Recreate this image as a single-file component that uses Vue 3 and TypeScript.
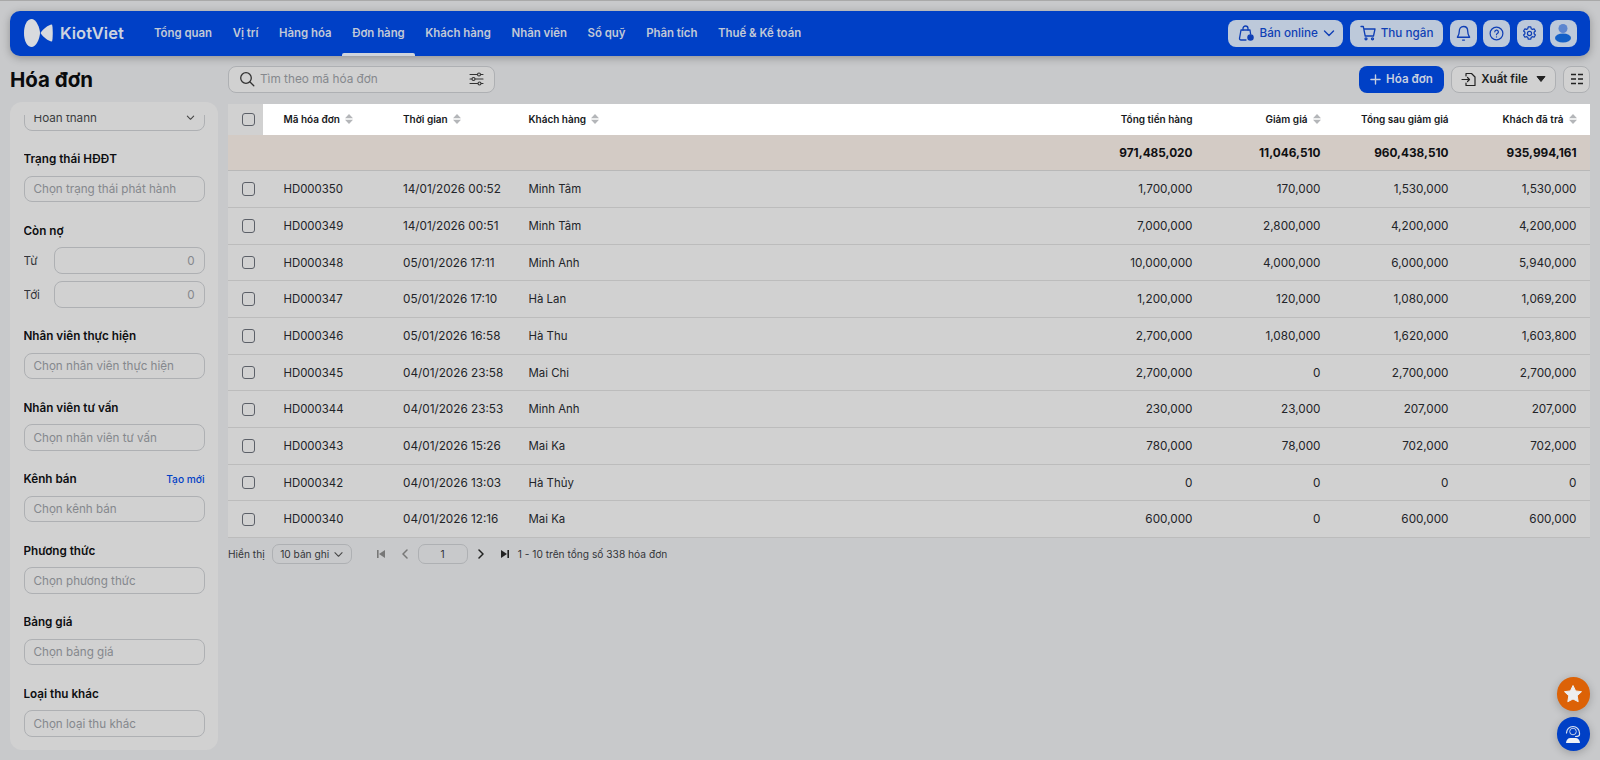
<script setup lang="ts">
const nav = ['Tổng quan', 'Vị trí', 'Hàng hóa', 'Đơn hàng', 'Khách hàng', 'Nhân viên', 'Sổ quỹ', 'Phân tích', 'Thuế & Kế toán']

interface Row { id: string; time: string; name: string; total: string; discount: string; after: string; paid: string }
const rows: Row[] = [
  { id: 'HD000350', time: '14/01/2026 00:52', name: 'Minh Tâm', total: '1,700,000', discount: '170,000', after: '1,530,000', paid: '1,530,000' },
  { id: 'HD000349', time: '14/01/2026 00:51', name: 'Minh Tâm', total: '7,000,000', discount: '2,800,000', after: '4,200,000', paid: '4,200,000' },
  { id: 'HD000348', time: '05/01/2026 17:11', name: 'Minh Anh', total: '10,000,000', discount: '4,000,000', after: '6,000,000', paid: '5,940,000' },
  { id: 'HD000347', time: '05/01/2026 17:10', name: 'Hà Lan', total: '1,200,000', discount: '120,000', after: '1,080,000', paid: '1,069,200' },
  { id: 'HD000346', time: '05/01/2026 16:58', name: 'Hà Thu', total: '2,700,000', discount: '1,080,000', after: '1,620,000', paid: '1,603,800' },
  { id: 'HD000345', time: '04/01/2026 23:58', name: 'Mai Chi', total: '2,700,000', discount: '0', after: '2,700,000', paid: '2,700,000' },
  { id: 'HD000344', time: '04/01/2026 23:53', name: 'Minh Anh', total: '230,000', discount: '23,000', after: '207,000', paid: '207,000' },
  { id: 'HD000343', time: '04/01/2026 15:26', name: 'Mai Ka', total: '780,000', discount: '78,000', after: '702,000', paid: '702,000' },
  { id: 'HD000342', time: '04/01/2026 13:03', name: 'Hà Thủy', total: '0', discount: '0', after: '0', paid: '0' },
  { id: 'HD000340', time: '04/01/2026 12:16', name: 'Mai Ka', total: '600,000', discount: '0', after: '600,000', paid: '600,000' },
]

const leftHeads = ['Mã hóa đơn', 'Thời gian', 'Khách hàng']
const rightHeads = [
  { text: 'Tổng tiền hàng', sort: false },
  { text: 'Giảm giá', sort: true },
  { text: 'Tổng sau giảm giá', sort: false },
  { text: 'Khách đã trả', sort: true },
]
const totals = ['971,485,020', '11,046,510', '960,438,510', '935,994,161']

const fieldsA = [{ label: 'Nhân viên thực hiện', ph: 'Chọn nhân viên thực hiện' }, { label: 'Nhân viên tư vấn', ph: 'Chọn nhân viên tư vấn' }]
const fieldsB = [{ label: 'Phương thức', ph: 'Chọn phương thức' }, { label: 'Bảng giá', ph: 'Chọn bảng giá' }, { label: 'Loại thu khác', ph: 'Chọn loại thu khác' }]
</script>

<template>
  <div class="page">
    <header class="topbar">
      <div class="logo">
        <svg width="30" height="28" viewBox="0 0 30 28">
          <path d="M8 0C3 0 0 6 0 14s3 14 8 14c4 0 8-9 8-14S12 0 8 0Z" fill="#d8dade" />
          <path d="M28 5.500C24 6 19 10 16.500 14c2.500 4 7.500 8 11.500 8.500 1-2.500 1-14.500 0-17Z" fill="#d8dade" />
        </svg>
        <span class="logo-text">KiotViet</span>
      </div>
      <nav class="nav">
        <a v-for="n in nav" :key="n" class="nav-item" :class="{ active: n === 'Đơn hàng' }">{{ n }}</a>
      </nav>
      <div class="actions">
        <button class="top-btn online">
          <svg width="18" height="18" viewBox="0 0 18 18" fill="none" stroke="#0f3fb5" stroke-width="1.300" stroke-linecap="round" stroke-linejoin="round">
            <path d="M6 6V4.500a2.500 2.500 0 0 1 5 0V6" />
            <path d="M4 6h9l.6 4M9 16H4a1.500 1.500 0 0 1-1.500-1.700L4 6" />
            <circle cx="13.500" cy="13.500" r="2.600" fill="#0f3fb5" />
          </svg>
          <span>Bán online</span>
          <svg width="12" height="12" viewBox="0 0 12 12" fill="none" stroke="#0f3fb5" stroke-width="1.400" stroke-linecap="round" stroke-linejoin="round"><path d="M1.500 4 6 8.500 10.500 4" /></svg>
        </button>
        <button class="top-btn cashier">
          <svg width="16" height="16" viewBox="0 0 16 16" fill="none" stroke="#0f3fb5" stroke-width="1.300" stroke-linecap="round" stroke-linejoin="round">
            <path d="M1 1.500h2.300l1.900 9.500h8.300l1.500-7H3.700" />
            <circle cx="6" cy="13.800" r="1" /><circle cx="12.500" cy="13.800" r="1" />
          </svg>
          <span>Thu ngân</span>
        </button>
        <button class="top-btn icon">
          <svg width="15" height="17" viewBox="0 0 16 18" fill="none" stroke="#0f3fb5" stroke-width="1.400" stroke-linecap="round" stroke-linejoin="round">
            <path d="M8 1.500C5 1.500 3.500 4 3.500 6.500c0 4-2 6-2 6.500h13c0-.5-2-2.500-2-6.500C12.500 4 11 1.500 8 1.500Z" /><path d="M7 16h2" />
          </svg>
        </button>
        <button class="top-btn icon">
          <svg width="15" height="15" viewBox="0 0 16 16" fill="none" stroke="#0f3fb5" stroke-width="1.300" stroke-linecap="round">
            <circle cx="8" cy="8" r="6.800" /><path d="M6.200 6.200a1.900 1.900 0 1 1 2.700 1.800c-.6.300-.9.700-.9 1.300" /><path d="M8 11.500v.1" />
          </svg>
        </button>
        <button class="top-btn icon">
          <svg width="15" height="15" viewBox="0 0 16 16" fill="none" stroke="#0f3fb5" stroke-width="1.300" stroke-linejoin="round">
            <path d="M6.600 1h2.800l.4 1.900 1.300.7 1.800-.6 1.400 2.400-1.400 1.300v1.600l1.400 1.300-1.400 2.400-1.800-.6-1.300.7-.4 1.900H6.600l-.4-1.900-1.300-.7-1.800.6-1.400-2.400 1.400-1.300V6.700L1.700 5.400l1.400-2.400 1.800.6 1.300-.7Z" />
            <circle cx="8" cy="8" r="2.200" />
          </svg>
        </button>
        <button class="top-btn icon">
          <svg width="20" height="20" viewBox="0 0 20 20">
            <circle cx="10" cy="5.500" r="4.500" fill="#5d86cf" /><ellipse cx="10" cy="15" rx="8" ry="4.500" fill="#1360c8" />
          </svg>
        </button>
      </div>
    </header>

    <div class="content">
      <aside class="left">
        <h1 class="title">Hóa đơn</h1>
        <div class="sidebar">
          <div class="side-scroll">
            <div class="select first">
              <span class="value">Hoàn thành</span>
              <svg width="9" height="9" viewBox="0 0 10 10" fill="none" stroke="#444" stroke-width="1.200" stroke-linecap="round" stroke-linejoin="round"><path d="M1.500 3.500 5 7l3.500-3.500" /></svg>
            </div>
            <section class="field">
              <label class="label">Trạng thái HĐĐT</label>
              <div class="select"><span class="ph">Chọn trạng thái phát hành</span></div>
            </section>
            <section class="field">
              <label class="label">Còn nợ</label>
              <div class="range">
                <span class="range-label">Từ</span>
                <div class="select num"><span class="ph">0</span></div>
              </div>
              <div class="range">
                <span class="range-label">Tới</span>
                <div class="select num"><span class="ph">0</span></div>
              </div>
            </section>
            <section v-for="f in fieldsA" :key="f.label" class="field">
              <label class="label">{{ f.label }}</label>
              <div class="select"><span class="ph">{{ f.ph }}</span></div>
            </section>
            <section class="field">
              <div class="label-row">
                <label class="label">Kênh bán</label>
                <a class="link">Tạo mới</a>
              </div>
              <div class="select"><span class="ph">Chọn kênh bán</span></div>
            </section>
            <section v-for="f in fieldsB" :key="f.label" class="field">
              <label class="label">{{ f.label }}</label>
              <div class="select"><span class="ph">{{ f.ph }}</span></div>
            </section>
          </div>
        </div>
      </aside>

      <main class="main">
        <div class="toolbar">
          <div class="search">
            <svg width="16" height="16" viewBox="0 0 16 16" fill="none" stroke="#333" stroke-width="1.300" stroke-linecap="round"><circle cx="7" cy="7" r="5.300" /><path d="m11 11 3.800 3.800" /></svg>
            <span class="search-ph">Tìm theo mã hóa đơn</span>
            <svg class="filter" width="15" height="14" viewBox="0 0 15 14" fill="none" stroke="#333" stroke-width="1.100" stroke-linecap="round">
              <path d="M1 2.500h13M1 7h13M1 11.500h13" />
              <circle cx="10" cy="2.500" r="1.500" fill="#d1d1d1" /><circle cx="4.500" cy="7" r="1.500" fill="#d1d1d1" /><circle cx="10.500" cy="11.500" r="1.500" fill="#d1d1d1" />
            </svg>
          </div>
          <div class="tools">
            <button class="btn primary">
              <svg width="11" height="11" viewBox="0 0 12 12" stroke="#c8d0e0" stroke-width="1.500" stroke-linecap="round"><path d="M6 1v10M1 6h10" /></svg>
              <span>Hóa đơn</span>
            </button>
            <button class="btn outline">
              <svg width="15" height="15" viewBox="0 0 15 15" fill="none" stroke="#222" stroke-width="1.200" stroke-linecap="round" stroke-linejoin="round">
                <path d="M5 4V1.500h5.500L14 5v8.500H5V11" /><path d="M1 7.500h7.500M6.500 5.500l2 2-2 2" />
              </svg>
              <span>Xuất file</span>
              <svg class="caret" width="10" height="6" viewBox="0 0 10 6"><path d="M1 .5h8L5 5.500Z" fill="#222" stroke="#222" stroke-linejoin="round" /></svg>
            </button>
            <button class="btn square">
              <svg width="12" height="12" viewBox="0 0 12 12" stroke="#222" stroke-width="1.300"><path d="M0 1.500h5M7 1.500h5M0 6h5M7 6h5M0 10.500h5M7 10.500h5" /></svg>
            </button>
          </div>
        </div>

        <div class="table">
          <div class="row head">
            <div class="head-check"><span class="box"></span></div>
            <div v-for="h in leftHeads" :key="h" class="cell th">
              <span>{{ h }}</span>
              <svg class="sort" width="8" height="10" viewBox="0 0 8 10" fill="#b4b6b9"><path d="M4 0l4 4.200H0ZM4 10l4-4.200H0Z" /></svg>
            </div>
            <div v-for="h in rightHeads" :key="h.text" class="cell th right">
              <span>{{ h.text }}</span>
              <svg v-if="h.sort" class="sort" width="8" height="10" viewBox="0 0 8 10" fill="#b4b6b9"><path d="M4 0l4 4.200H0ZM4 10l4-4.200H0Z" /></svg>
            </div>
          </div>
          <div class="row summary">
            <div class="spacer"></div>
            <div v-for="t in totals" :key="t" class="cell right strong">{{ t }}</div>
          </div>
          <div v-for="r in rows" :key="r.id" class="row body">
            <div class="check"><span class="box"></span></div>
            <div class="cell narrow">{{ r.id }}</div>
            <div class="cell">{{ r.time }}</div>
            <div class="cell narrow">{{ r.name }}</div>
            <div class="cell right">{{ r.total }}</div>
            <div class="cell right">{{ r.discount }}</div>
            <div class="cell right">{{ r.after }}</div>
            <div class="cell right">{{ r.paid }}</div>
          </div>
        </div>

        <div class="pager">
          <span>Hiển thị</span>
          <div class="page-size">
            <span>10 bản ghi</span>
            <svg width="9" height="9" viewBox="0 0 10 10" fill="none" stroke="#444" stroke-width="1.200" stroke-linecap="round" stroke-linejoin="round"><path d="M1 3l4 4 4-4" /></svg>
          </div>
          <div class="page-nav">
            <svg class="pg" width="8" height="8" viewBox="0 0 8 8" fill="#777"><path d="M0 0h1.600v8H0ZM8 0v8L2 4Z" /></svg>
            <svg class="pg" width="8" height="10" viewBox="0 0 8 10" fill="none" stroke="#777" stroke-width="1.500" stroke-linecap="round" stroke-linejoin="round"><path d="M6 1 2 5l4 4" /></svg>
            <div class="page-input">1</div>
            <svg class="pg" width="8" height="10" viewBox="0 0 8 10" fill="none" stroke="#222" stroke-width="1.500" stroke-linecap="round" stroke-linejoin="round"><path d="m2 1 4 4-4 4" /></svg>
            <svg class="pg" width="8" height="8" viewBox="0 0 8 8" fill="#222"><path d="M8 0H6.400v8H8ZM0 0v8l6-4Z" /></svg>
          </div>
          <span class="count">1 - 10 trên tổng số 338 hóa đơn</span>
        </div>
      </main>
    </div>

    <button class="fab star">
      <svg width="20" height="20" viewBox="0 0 20 20"><path d="m10 1.500 2.600 5.400 5.900.8-4.300 4.100 1 5.900L10 15l-5.200 2.700 1-5.900L1.500 7.700l5.900-.8Z" fill="#eee" stroke="#eee" stroke-linejoin="round" /></svg>
    </button>
    <button class="fab support">
      <svg width="22" height="22" viewBox="0 0 22 22" fill="none">
        <circle cx="11" cy="8.500" r="3.300" fill="#0040c6" stroke="#c5d3ec" stroke-width="1" />
        <path d="M4.500 10a6.500 6.500 0 0 1 13 0v1.500c0 1-1.500 2-4 2" stroke="#dfe6f2" stroke-width="1.200" stroke-linecap="round" />
        <path d="M4 20c0-3 2-5 4.500-5h5c2.500 0 4.500 2 4.500 5Z" fill="#eef1f6" />
      </svg>
    </button>
  </div>
</template>

<style>
html, body { margin: 0; background: #c8c9cb; }
</style>

<style scoped>
.page {
  position: relative;
  box-sizing: border-box;
  height: 760px;
  overflow: hidden;
  padding: 10px 10px 0;
  border-top: 1px solid #a9a9a9;
  background: #c8c9cb;
  color: #1d1f22;
  font-family: Inter, "Noto Sans", sans-serif;
  font-size: 12px;
}
button { font-family: inherit; border: 0; padding: 0; }

.topbar {
  display: flex;
  align-items: center;
  height: 44.5px;
  padding: 0 13.300px 0 14px;
  background: #0040c6;
  border-radius: 10px;
  box-shadow: 0 2px 8px rgba(0, 0, 0, .28);
}
.logo { display: flex; align-items: center; gap: 6px; width: 120px; flex: none; }
.logo-text { font-size: 16.500px; font-weight: 600; color: #ccd3df; }
.nav { display: flex; align-self: stretch; margin-left: -.4px; }
.nav-item {
  position: relative;
  display: flex;
  align-items: center;
  padding: 0 10.300px;
  font-size: 11.400px;
  font-weight: 600;
  color: #c2c9d6;
  white-space: nowrap;
}
.nav-item.active::after {
  content: "";
  position: absolute;
  left: 0; right: 0; bottom: 0;
  height: 2.500px;
  background: #cfd4dc;
  border-radius: 2px 2px 0 0;
}
.actions { display: flex; gap: 6.700px; margin-left: auto; }
.top-btn {
  display: flex;
  align-items: center;
  justify-content: center;
  gap: 5px;
  height: 26.600px;
  background: #bdc9da;
  border-radius: 8px;
  color: #0f3fb5;
  font-size: 11.700px;
  font-weight: 500;
}
.online { width: 115px; }
.cashier { width: 93.300px; }
.icon { width: 26.700px; }

.content { display: grid; grid-template-columns: 208px 1fr; gap: 10px; }
.left { display: flex; flex-direction: column; }
.title {
  height: 46.800px;
  margin: 0;
  font-size: 20.500px;
  font-weight: 700;
  line-height: 47px;
  color: #0a0b0d;
  white-space: nowrap;
}
.sidebar {
  height: 648px;
  box-sizing: border-box;
  padding: 13px 13.500px 0;
  background: #d1d1d1;
  border-radius: 12px;
}
.side-scroll {
  display: flex;
  flex-direction: column;
  gap: 19.500px;
  height: 630px;
  overflow: hidden;
}
.first { margin-top: -11px; flex: none; }
.field { display: flex; flex-direction: column; gap: 7.500px; flex: none; }
.label { height: 18px; line-height: 18px; font-size: 11.700px; font-weight: 600; color: #0d0e10; }
.label-row { display: flex; justify-content: space-between; align-items: center; }
.link { font-size: 10.200px; font-weight: 500; color: #0040c6; }
.select {
  display: flex;
  align-items: center;
  justify-content: space-between;
  box-sizing: border-box;
  height: 26.500px;
  padding: 0 9px;
  border: 1px solid #aeb0b3;
  border-radius: 8px;
  font-size: 11.650px;
}
.value { color: #3b3d40; }
.ph { color: #85888d; }
.range { display: flex; align-items: center; }
.range-label { width: 30.500px; font-size: 11.700px; color: #33353a; }
.num { flex: 1; justify-content: flex-end; }

.main { min-width: 0; }
.toolbar { display: flex; justify-content: space-between; height: 26.500px; margin: 10.500px 0 11px; }
.search {
  display: flex;
  align-items: center;
  box-sizing: border-box;
  width: 267px;
  padding: 0 10px;
  border: 1px solid #aeb0b3;
  border-radius: 8px;
  background: #d1d1d1;
}
.search-ph { margin-left: 5px; font-size: 11.800px; color: #85888d; }
.filter { margin-left: auto; }
.tools { display: flex; gap: 7px; }
.btn {
  display: flex;
  align-items: center;
  justify-content: center;
  gap: 5px;
  box-sizing: border-box;
  height: 26.500px;
  border-radius: 8px;
  font-size: 11.600px;
  font-weight: 600;
}
.primary { width: 85px; background: #0040c6; color: #c8d0e0; }
.outline { width: 105px; background: #d1d1d1; border: 1px solid #aeb0b3; color: #1d1f22; }
.caret { margin-left: 3px; }
.square { width: 27px; background: #d1d1d1; border: 1px solid #aeb0b3; }

.table { width: 100%; }
.row {
  display: grid;
  grid-template-columns: 55.500px 119.500px 125.500px 1fr 128px 128px 128px 128px;
  align-items: center;
}
.head { height: 31.500px; background: #fff; }
.summary {
  height: 36.300px;
  padding-top: 1.500px;
  background: #d3cbc5;
  border-bottom: 1px solid #b8b8b8;
  box-sizing: border-box;
  grid-template-columns: 1fr 128px 128px 128px 128px;
}
.body {
  height: 36.700px;
  box-sizing: border-box;
  background: #d1d1d1;
  border-bottom: 1px solid #bcbcbc;
}
.cell { min-width: 0; white-space: nowrap; font-size: 11.750px; color: #222428; }
.narrow { font-size: 11.400px; }
.check { display: flex; align-items: center; padding-left: 13.500px; }
.head-check {
  display: flex;
  align-items: center;
  align-self: stretch;
  box-sizing: border-box;
  width: 35px;
  padding-left: 13.500px;
  background: #d1d1d1;
}
.box {
  display: block;
  flex: none;
  box-sizing: border-box;
  width: 13.500px;
  height: 13.500px;
  border: 1px solid #5c6068;
  border-radius: 3px;
}
.th { display: flex; align-items: center; gap: 5px; font-size: 10px; font-weight: 600; color: #16181b; }
.right { justify-self: end; padding-right: 13.500px; }
.strong { font-weight: 700; font-size: 11.800px; color: #0f1012; }
.spacer { min-width: 0; }

.pager { display: flex; align-items: center; height: 20px; margin-top: 6.200px; font-size: 10.200px; color: #33353a; }
.page-size {
  display: flex;
  align-items: center;
  justify-content: center;
  gap: 5px;
  box-sizing: border-box;
  width: 80px;
  height: 20px;
  margin-left: 7px;
  border: 1px solid #aeb0b3;
  border-radius: 7px;
}
.page-nav { display: flex; align-items: center; margin-left: 25px; }
.pg { flex: none; }
.pg:nth-child(2) { margin-left: 16px; }
.pg:nth-child(4) { margin-left: 9px; }
.pg:nth-child(5) { margin-left: 16px; }
.page-input {
  display: flex;
  align-items: center;
  justify-content: center;
  box-sizing: border-box;
  width: 50px;
  height: 20px;
  margin-left: 9px;
  border: 1px solid #aeb0b3;
  border-radius: 7px;
}
.count { margin-left: 9px; }

.fab {
  position: absolute;
  right: 10px;
  display: flex;
  align-items: center;
  justify-content: center;
  width: 33.400px;
  height: 33.400px;
  border-radius: 50%;
  box-shadow: 0 2px 8px rgba(0, 0, 0, .22);
}
.star { top: 676.300px; background: #dc6207; }
.support { top: 716.300px; background: #0040c6; }
</style>
